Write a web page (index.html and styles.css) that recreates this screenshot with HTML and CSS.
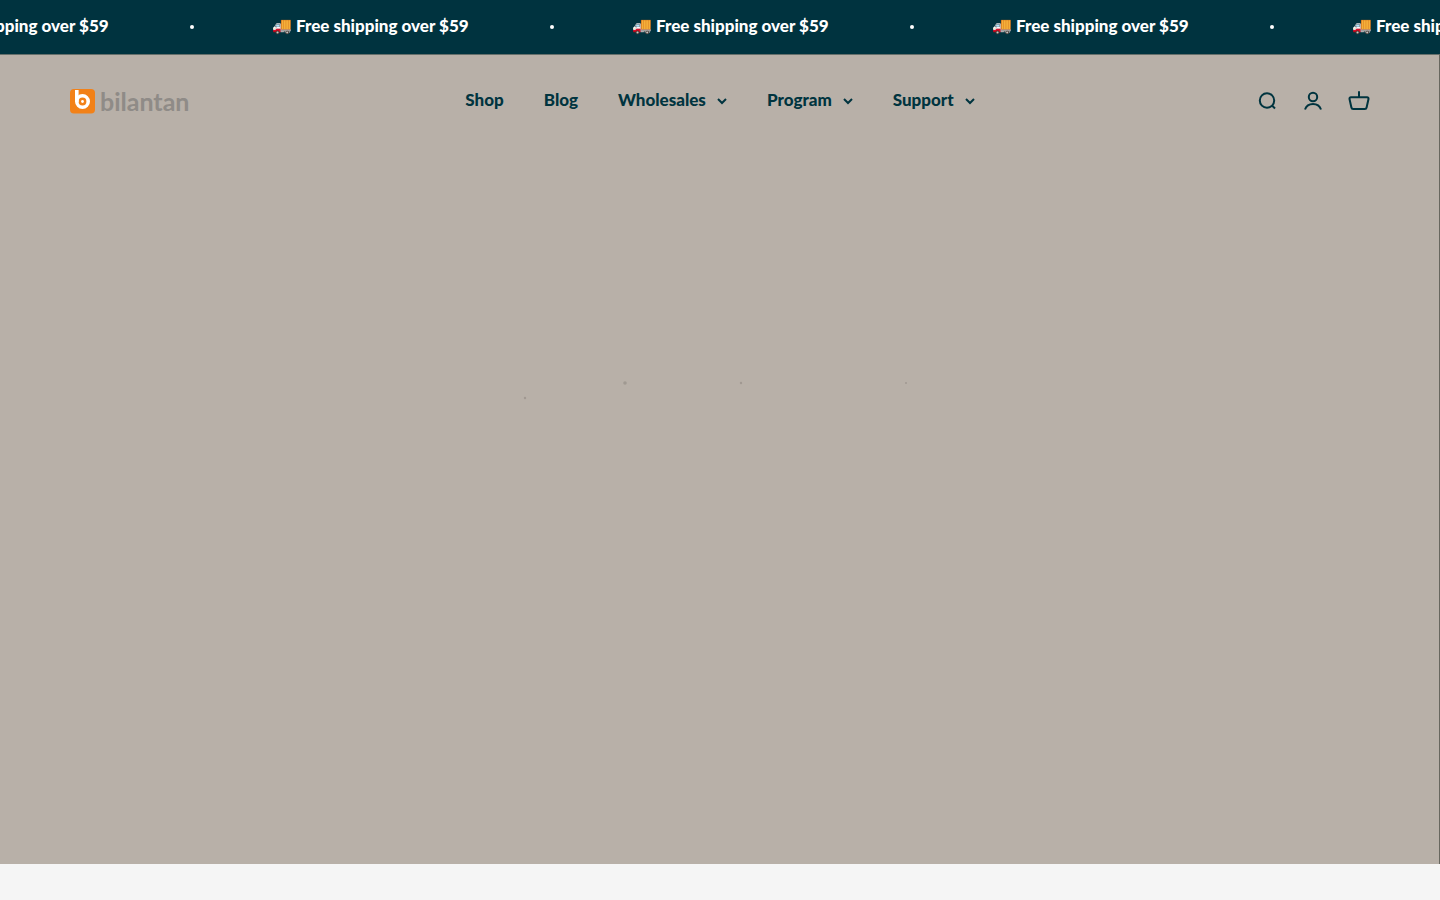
FILE: index.html
```html
<!DOCTYPE html>
<html lang="en">
<head>
    <meta charset="UTF-8">
    <meta name="viewport" content="width=device-width, initial-scale=1.0">
    <title>Bilantan</title>
    <link rel="stylesheet" href="styles.css">
</head>
<body>
    <div class="announcement-bar">
        <ul class="marquee">
            <li><span class="emoji">🚚</span> Free shipping over $59</li>
            <li><span class="emoji">🚚</span> Free shipping over $59</li>
            <li><span class="emoji">🚚</span> Free shipping over $59</li>
            <li><span class="emoji">🚚</span> Free shipping over $59</li>
            <li><span class="emoji">🚚</span> Free shipping over $59</li>
        </ul>
    </div>

    <div class="hero">
        <header class="header">
            <a class="logo" href="#" aria-label="bilantan">
                <svg width="25" height="25" viewBox="0 0 25 25" aria-hidden="true">
                    <rect width="25" height="24.500" rx="4" fill="#f28118"/>
                    <rect x="5" y="1" width="3.600" height="12" fill="#fff"/>
                    <circle cx="12.500" cy="12.500" r="5.700" fill="none" stroke="#fff" stroke-width="3.600"/>
                    <circle cx="12.500" cy="12.500" r="1.400" fill="#fff"/>
                </svg>
                <span class="logo-name">bilantan</span>
            </a>

            <nav class="nav">
                <a href="#">Shop</a>
                <a href="#">Blog</a>
                <button type="button">Wholesales
                    <svg class="chevron" viewBox="0 0 10 7"><path d="m1 1 4 4 4-4"/></svg>
                </button>
                <button type="button">Program
                    <svg class="chevron" viewBox="0 0 10 7"><path d="m1 1 4 4 4-4"/></svg>
                </button>
                <button type="button">Support
                    <svg class="chevron" viewBox="0 0 10 7"><path d="m1 1 4 4 4-4"/></svg>
                </button>
            </nav>

            <div class="actions">
                <a href="#" aria-label="Search">
                    <svg class="icon" viewBox="0 0 22 22"><circle cx="11" cy="10.500" r="7.200"/><path d="m16 15.500 3 3"/></svg>
                </a>
                <a href="#" aria-label="Account">
                    <svg class="icon" viewBox="0 0 22 22"><circle cx="11" cy="7" r="4.200"/><path d="M3 19.500c1.200-3.500 4.300-5.500 8-5.500s6.800 2 8 5.500"/></svg>
                </a>
                <a href="#" aria-label="Cart">
                    <svg class="icon" viewBox="0 0 22 22"><path d="M11 1.200v6M3 7.200h16a1.500 1.500 0 0 1 1.500 1.800l-1.900 8.500a1.800 1.800 0 0 1-1.800 1.500H5.200a1.800 1.800 0 0 1-1.800-1.500L1.500 9A1.500 1.500 0 0 1 3 7.200Z"/></svg>
                </a>
            </div>
        </header>

        <!-- dust in the opening video frame -->
        <svg class="specks" viewBox="0 0 400 24" aria-hidden="true">
            <circle cx="5" cy="20" r="1.200"/>
            <circle cx="105" cy="5" r="1.800"/>
            <circle cx="221" cy="5" r="1.200"/>
            <circle cx="386" cy="5" r="1"/>
        </svg>
    </div>
</body>
</html>
```
FILE: styles.css
```css
* {
    margin: 0;
    padding: 0;
    box-sizing: border-box;
}

body {
    font-family: Lato, sans-serif;
    font-size: 17px;
    font-weight: 900;
    line-height: 26px;
    color: #00343f;
    background: #f5f5f5;
}

a {
    color: inherit;
    text-decoration: none;
}

svg {
    display: block;
}

.announcement-bar {
    background: #00333f;
    color: #fff;
    overflow: hidden;
}

.marquee {
    display: flex;
    list-style: none;
    padding: 13px 0 15px;
    margin-left: -88px;
}

.marquee li {
    display: flex;
    align-items: center;
    flex: 0 0 360px;
    gap: 5px;
    white-space: nowrap;
}

.marquee li::after {
    content: "";
    width: 4px;
    height: 4px;
    margin: 2px 78px 0 auto;
    border-radius: 50%;
    background: #fff;
}

.emoji {
    width: 19px;
    font-family: "Noto Color Emoji", sans-serif;
    font-size: 16px;
}

.hero {
    height: 90vh;
    background: #b8b0a8;
    border-top: 1px solid #66706c;
    border-right: 1px solid #68675f;
}

.header {
    display: grid;
    grid-template-columns: 1fr auto 1fr;
    align-items: center;
    height: 92px;
    padding: 0 69px 0 70px;
}

.logo {
    display: flex;
    align-items: center;
    gap: 5px;
}

.logo-name {
    color: #8f8b87;
    font-weight: 700;
    font-size: 25px;
}

.nav {
    display: flex;
    align-items: center;
    gap: 40px;
    padding-bottom: 2px;
}

.nav button {
    display: flex;
    align-items: center;
    gap: 11px;
    border: none;
    background: none;
    color: inherit;
    font: inherit;
    cursor: pointer;
}

.chevron {
    width: 10px;
    height: 7px;
    margin-top: 2px;
    fill: none;
    stroke: currentColor;
    stroke-width: 2;
}

.actions {
    display: flex;
    justify-content: flex-end;
    gap: 24px;
}

.icon {
    width: 22px;
    height: 22px;
    fill: none;
    stroke: currentColor;
    stroke-width: 2;
}

.specks {
    width: 400px;
    height: 24px;
    margin: 231px auto 0;
    fill: #a09992;
}
```
